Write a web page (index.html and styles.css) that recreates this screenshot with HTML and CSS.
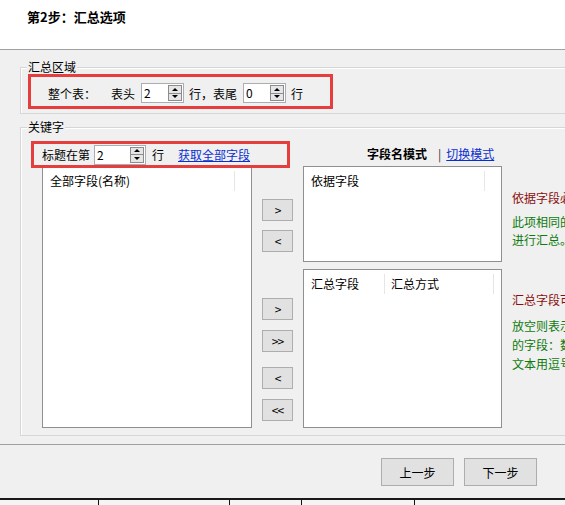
FILE: index.html
```html
<!DOCTYPE html>
<html lang="zh-CN">
<head>
<meta charset="utf-8">
<title>第2步：汇总选项</title>
<link rel="stylesheet" href="styles.css">
</head>
<body>
<div class="header"><h1 class="title">第2步：汇总选项</h1></div>

<div class="group g1">
  <div class="group-title">汇总区域</div>
  <div class="mark mark1">
    <span class="whole">整个表：</span>
    <span class="gap15">表头</span>
    <div class="spin spin-s"><span class="val">2</span><div class="spin-btns"><i class="up"></i><i class="down"></i></div></div>
    <span class="gap5">行，表尾</span>
    <div class="spin spin-s"><span class="val">0</span><div class="spin-btns"><i class="up"></i><i class="down"></i></div></div>
    <span class="gap5">行</span>
  </div>
</div>

<div class="group g2">
  <div class="group-title">关键字</div>
  <div class="toprow">
    <div class="mark mark2">
      <span>标题在第</span>
      <div class="spin spin-l"><span class="val">2</span><div class="spin-btns"><i class="up"></i><i class="down"></i></div></div>
      <span class="gap6">行</span>
      <a class="link gap14" href="#">获取全部字段</a>
    </div>
    <div class="mode">
      <span class="mode-name">字段名模式</span><span class="bar">|</span><a class="link" href="#">切换模式</a>
    </div>
  </div>

  <div class="main">
    <div class="lv lv-all">
      <div class="lv-head"><span class="col col-all">全部字段(名称)</span></div>
    </div>

    <div class="movers">
      <button class="mv">&gt;</button>
      <button class="mv mv2">&lt;</button>
      <button class="mv mv3">&gt;</button>
      <button class="mv mv4">&gt;&gt;</button>
      <button class="mv mv5">&lt;</button>
      <button class="mv mv6">&lt;&lt;</button>
    </div>

    <div class="lists">
      <div class="lv lv-by">
        <div class="lv-head"><span class="col col-by">依据字段</span></div>
      </div>
      <div class="lv lv-sum">
        <div class="lv-head"><span class="col col-sf">汇总字段</span><span class="col col-sm">汇总方式</span></div>
      </div>
    </div>

    <div class="notes">
      <p class="warn n1">依据字段必须选择</p>
      <p class="tip n2">此项相同的行</p>
      <p class="tip">进行汇总。</p>
      <p class="warn n4">汇总字段可选</p>
      <p class="tip tip2 n5">放空则表示</p>
      <p class="tip tip2">的字段：数</p>
      <p class="tip tip2">文本用逗号</p>
    </div>
  </div>
</div>

<div class="footer">
  <button class="btn">上一步</button>
  <button class="btn">下一步</button>
</div>

<div class="strip">
  <span class="cell c1"></span><span class="cell c2"></span><span class="cell c3"></span><span class="cell c4"></span><span class="cell c5"></span>
</div>
</body>
</html>
```

FILE: styles.css
```css
html, body {
  margin: 0;
  padding: 0;
  width: 565px;
  height: 505px;
  overflow: hidden;
}
body {
  background: #f0f0f0;
  font-family: "Noto Sans CJK SC", "Liberation Sans", sans-serif;
  font-size: 12px;
  color: #000;
}

.header {
  height: 49px;
  background: #fff;
  border-bottom: 1px solid #a0a0a0;
  box-sizing: content-box;
}
.title {
  margin: 0;
  padding: 8px 0 0 27px;
  font-size: 13px;
  line-height: 18px;
  font-weight: 700;
}

.group {
  border: 1px solid #d6d6d6;
  box-shadow: inset 1px 1px 0 #fff;
  margin-left: 20px;
  margin-right: -60px;
}
.g1 {
  margin-top: 17px;
  padding-bottom: 4px;
}
.g2 {
  margin-top: 13px;
  padding-bottom: 7px;
}
.group-title {
  display: table;
  margin: -9px 0 0 6px;
  padding: 0 1px;
  background: #f0f0f0;
  line-height: 16px;
  white-space: nowrap;
}

.mark {
  border: 3px solid #e53e3e;
  box-sizing: border-box;
  display: flex;
  align-items: center;
  white-space: nowrap;
  position: relative;
  z-index: 2;
  flex-shrink: 0;
}
.mark1 {
  margin: -1px 0 0 7px;
  width: 305px;
  height: 35px;
  padding: 3px 0 0 17px;
}
.mark2 {
  margin-left: 10px;
  width: 259px;
  height: 27px;
  padding: 0 0 0 8px;
}
.gap15 { margin-left: 15px; }
.gap5 { margin-left: 5px; }
.gap6 { margin-left: 6px; }
.gap14 { margin-left: 14px; }

.spin {
  display: flex;
  flex-shrink: 0;
  height: 20px;
  box-sizing: border-box;
  border: 1px solid #abadb3;
  background: #fff;
  margin-left: 6px;
}
.spin-s { width: 43px; }
.spin-l { width: 52px; margin-left: 4px; }
.val {
  flex: 1;
  padding-left: 2px;
  line-height: 18px;
}
.spin-btns {
  display: flex;
  flex-direction: column;
  width: 14px;
  margin: 1px 1px 1px 0;
  border: 1px solid #8c8c8c;
  box-sizing: border-box;
}
.spin-btns i {
  flex: 1;
  display: flex;
  align-items: center;
  justify-content: center;
  background: #e6e6e6;
}
.spin-btns i + i { border-top: 1px solid #8c8c8c; }
.up::before {
  content: "";
  border-left: 3px solid transparent;
  border-right: 3px solid transparent;
  border-bottom: 3px solid #000;
}
.down::before {
  content: "";
  border-left: 3px solid transparent;
  border-right: 3px solid transparent;
  border-top: 3px solid #000;
}

.link {
  color: #0a2fd0;
  text-decoration: underline;
}

.toprow {
  display: flex;
  align-items: center;
  margin-top: 6px;
  height: 27px;
}
.mode {
  margin-left: 77px;
  padding-bottom: 2px;
  white-space: nowrap;
  display: flex;
  align-items: center;
  flex-shrink: 0;
}
.mode-name { font-weight: 700; }
.bar {
  margin: 0 5px 0 11px;
  color: #333;
}

.main {
  display: flex;
  align-items: flex-start;
  margin-top: -2px;
}
.lv {
  background: #fff;
  border: 1px solid #8f8f8f;
  box-sizing: border-box;
  flex-shrink: 0;
}
.lv-all {
  margin-left: 21px;
  width: 210px;
  height: 262px;
}
.lv-head {
  display: flex;
  margin-top: 4px;
  height: 20px;
  line-height: 20px;
  white-space: nowrap;
}
.col {
  box-sizing: border-box;
  padding-left: 7px;
  border-right: 1px solid #e6e6e6;
  flex-shrink: 0;
}
.col-all { width: 192px; }
.col-by { width: 181px; }
.col-sf { width: 81px; }
.col-sm { width: 109px; padding-left: 6px; }

.movers {
  display: flex;
  flex-direction: column;
  flex-shrink: 0;
  margin-left: 10px;
  width: 31px;
  padding-top: 33px;
}
.mv {
  width: 31px;
  height: 22px;
  margin: 0;
  padding: 0;
  background: #e1e1e1;
  border: 1px solid #adadad;
  font-family: "Noto Sans CJK SC", "Liberation Sans", sans-serif;
  font-size: 12px;
  line-height: 18px;
  color: #000;
  letter-spacing: -1px;
}
.mv2 { margin-top: 9px; }
.mv3 { margin-top: 46px; }
.mv4 { margin-top: 10px; }
.mv5 { margin-top: 15px; }
.mv6 { margin-top: 10px; }

.lists {
  flex-shrink: 0;
  margin-left: 10px;
  width: 199px;
}
.lv-by { height: 96px; }
.lv-sum { height: 159px; margin-top: 7px; }

.notes {
  margin-left: 10px;
  white-space: nowrap;
  flex-shrink: 0;
}
.notes p {
  margin: 0;
  line-height: 18px;
}
.warn { color: #8a0f0f; }
.tip { color: #0e7a0e; }
.notes .tip2 { line-height: 19px; }
.notes .n1 { margin-top: 23px; }
.notes .n2 { margin-top: 6px; }
.notes .n4 { margin-top: 42px; }
.notes .n5 { margin-top: 7px; }

.footer {
  margin-top: 8px;
  border-top: 1px solid #a0a0a0;
  padding: 13px 28px 0 0;
  display: flex;
  justify-content: flex-end;
  gap: 10px;
}
.btn {
  width: 73px;
  height: 28px;
  margin: 0;
  padding: 0;
  background: #e1e1e1;
  border: 1px solid #adadad;
  font-family: "Noto Sans CJK SC", "Liberation Sans", sans-serif;
  font-size: 12px;
  color: #000;
}

.strip {
  margin-top: 12px;
  border-top: 2px solid #1a1a1a;
  display: flex;
  height: 10px;
  background: #f4f4f4;
}
.cell {
  display: block;
  height: 10px;
  border-right: 1px solid #111;
  box-sizing: border-box;
}
.c1 { width: 99px; }
.c2 { width: 131px; }
.c3 { width: 72px; }
.c4 { width: 113px; }
.c5 { flex: 1; border-right: 0; }
```
